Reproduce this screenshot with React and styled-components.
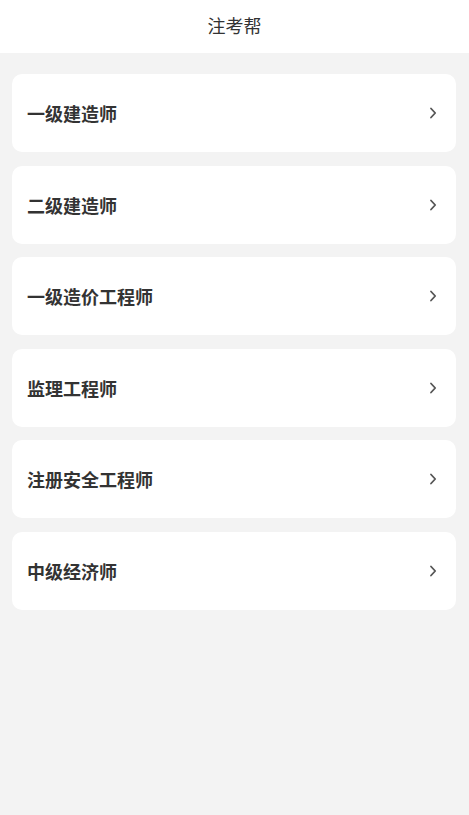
import React from "react";
import styled, { createGlobalStyle } from "styled-components";

const Global = createGlobalStyle`
  html, body { margin: 0; padding: 0; background: #f3f3f3; }
  body { font-family: "Noto Sans CJK SC", "Noto Sans", sans-serif; }
  * { box-sizing: border-box; }
`;

const Page = styled.div`
  min-height: 815px;
  background: #f3f3f3;
`;

const Header = styled.header`
  height: 53px;
  background: #ffffff;
  display: flex;
  align-items: center;
  justify-content: center;
  padding-bottom: 4px;
`;

const Title = styled.h1`
  margin: 0;
  font-size: 18px;
  font-weight: 400;
  color: #333333;
  line-height: 1;
`;

const List = styled.div`
  display: flex;
  flex-direction: column;
  gap: 13.6px;
  padding: 21px 13px 0 12px;
`;

const Card = styled.div`
  height: 78px;
  background: #ffffff;
  border-radius: 10px;
  display: flex;
  align-items: center;
  justify-content: space-between;
  padding: 0 19px 0 15px;
`;

const Label = styled.span`
  font-size: 18px;
  font-weight: 700;
  color: #333333;
`;

const Chevron = () => (
  <svg width="8" height="12" viewBox="0 0 8 12" fill="none">
    <path d="M2 1.5 L6.2 6 L2 10.5" stroke="#555" strokeWidth="1.8" strokeLinecap="round" strokeLinejoin="round" />
  </svg>
);

const items = ["一级建造师", "二级建造师", "一级造价工程师", "监理工程师", "注册安全工程师", "中级经济师"];

export default function App() {
  return (
    <Page>
      <Global />
      <Header>
        <Title>注考帮</Title>
      </Header>
      <List>
        {items.map((t) => (
          <Card key={t}>
            <Label>{t}</Label>
            <Chevron />
          </Card>
        ))}
      </List>
    </Page>
  );
}
